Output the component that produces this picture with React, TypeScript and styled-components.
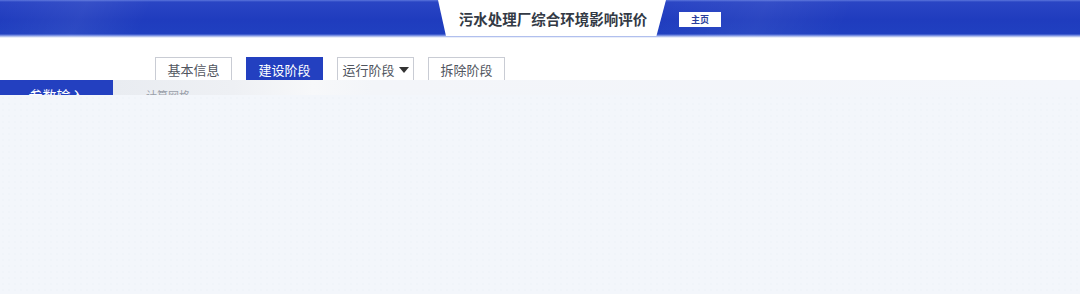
import React from "react";
import styled, { createGlobalStyle } from "styled-components";

const Global = createGlobalStyle`
  html, body { margin: 0; padding: 0; background: #f3f6fb; }
  body { font-family: "Noto Sans CJK SC", "Noto Sans", sans-serif; }
  * { box-sizing: border-box; }
`;

const Page = styled.div`
  width: 1080px;
  height: 294px;
  overflow: hidden;
  display: flex;
  flex-direction: column;
  background: #f3f6fb;
`;

const Header = styled.header`
  height: 38px;
  flex: none;
  display: flex;
  justify-content: flex-start;
  align-items: stretch;
  padding-left: 438px;
  background:
    linear-gradient(115deg, rgba(255,255,255,0) 0%, rgba(255,255,255,0.06) 8%, rgba(255,255,255,0) 14%, rgba(255,255,255,0) 60%, rgba(255,255,255,0.05) 70%, rgba(255,255,255,0) 78%),
    linear-gradient(180deg, #5b74dc 0px, #2a45c4 2px, #1f3cbe 20px, #2040c0 34px, #5f78da 35px, #8fa3e6 36px, #d3dcf5 37px, #ffffff 38px);
`;

const TitlePlate = styled.div`
  width: 228px;
  height: 36px;
  display: flex;
  align-items: center;
  justify-content: center;
  clip-path: polygon(0 0, 100% 0, 95.8% 100%, 3.5% 100%);
  background: #ffffff;
`;

const Title = styled.h1`
  margin: 0;
  font-size: 14.5px;
  font-weight: 700;
  color: #333a45;
  padding-left: 2px;
`;

const HomeButton = styled.button`
  align-self: flex-start;
  margin-top: 12px;
  margin-left: 13px;
  width: 42px;
  height: 15px;
  padding: 0;
  border: none;
  background: #ffffff;
  color: #2b3f9c;
  font-family: inherit;
  font-size: 9px;
  font-weight: 700;
  line-height: 15px;
`;

const TabBar = styled.nav`
  height: 42px;
  flex: none;
  background: #ffffff;
  display: flex;
  align-items: flex-end;
  gap: 14px;
  padding-left: 155px;
`;

const Tab = styled.button<{ $active?: boolean }>`
  width: 77px;
  height: 24px;
  padding: 0;
  margin-bottom: -1px;
  border: 1px solid ${(p) => (p.$active ? "#2340c0" : "#c9ccd4")};
  background: ${(p) => (p.$active ? "#2340c0" : "#ffffff")};
  color: ${(p) => (p.$active ? "#ffffff" : "#50555e")};
  font-family: inherit;
  font-size: 13px;
  line-height: 21px;
  display: flex;
  align-items: center;
  justify-content: center;
  gap: 2px;
`;

const Caret = styled.span`
  width: 0;
  height: 0;
  border-left: 5px solid transparent;
  border-right: 5px solid transparent;
  border-top: 6px solid #333;
  margin-left: 2px;
  margin-top: 1px;
`;

const Body = styled.div`
  position: relative;
  flex: 1;
  display: flex;
`;

const Sidebar = styled.aside`
  width: 113px;
  flex: none;
  background: #2340c0;
`;

const SideItem = styled.div`
  height: 29px;
  display: flex;
  align-items: center;
  justify-content: center;
  color: #ffffff;
  font-size: 14px;
`;

const Content = styled.main`
  flex: 1;
  background: linear-gradient(90deg, #e9ecf1 0px, #eef0f4 120px, #f7f8fa 200px, #f3f5f9 260px, #f3f6fb 100%);
  padding: 7px 0 0 33px;
`;

const SubLabel = styled.div`
  font-size: 11px;
  color: #9aa0aa;
`;

const Veil = styled.div`
  position: absolute;
  left: 0;
  right: 0;
  top: 15px;
  bottom: 0;
  background-color: #f3f6fb;
  background-image: radial-gradient(rgba(205,214,230,0.18) 0.6px, transparent 0.8px);
  background-size: 6px 6px;
`;

export default function App() {
  return (
    <Page>
      <Global />
      <Header>
        <TitlePlate>
          <Title>污水处理厂综合环境影响评价</Title>
        </TitlePlate>
        <HomeButton>主页</HomeButton>
      </Header>
      <TabBar>
        <Tab>基本信息</Tab>
        <Tab $active>建设阶段</Tab>
        <Tab>
          运行阶段
          <Caret />
        </Tab>
        <Tab>拆除阶段</Tab>
      </TabBar>
      <Body>
        <Sidebar>
          <SideItem>参数输入</SideItem>
        </Sidebar>
        <Content>
          <SubLabel>计算网格</SubLabel>
        </Content>
        <Veil />
      </Body>
    </Page>
  );
}
